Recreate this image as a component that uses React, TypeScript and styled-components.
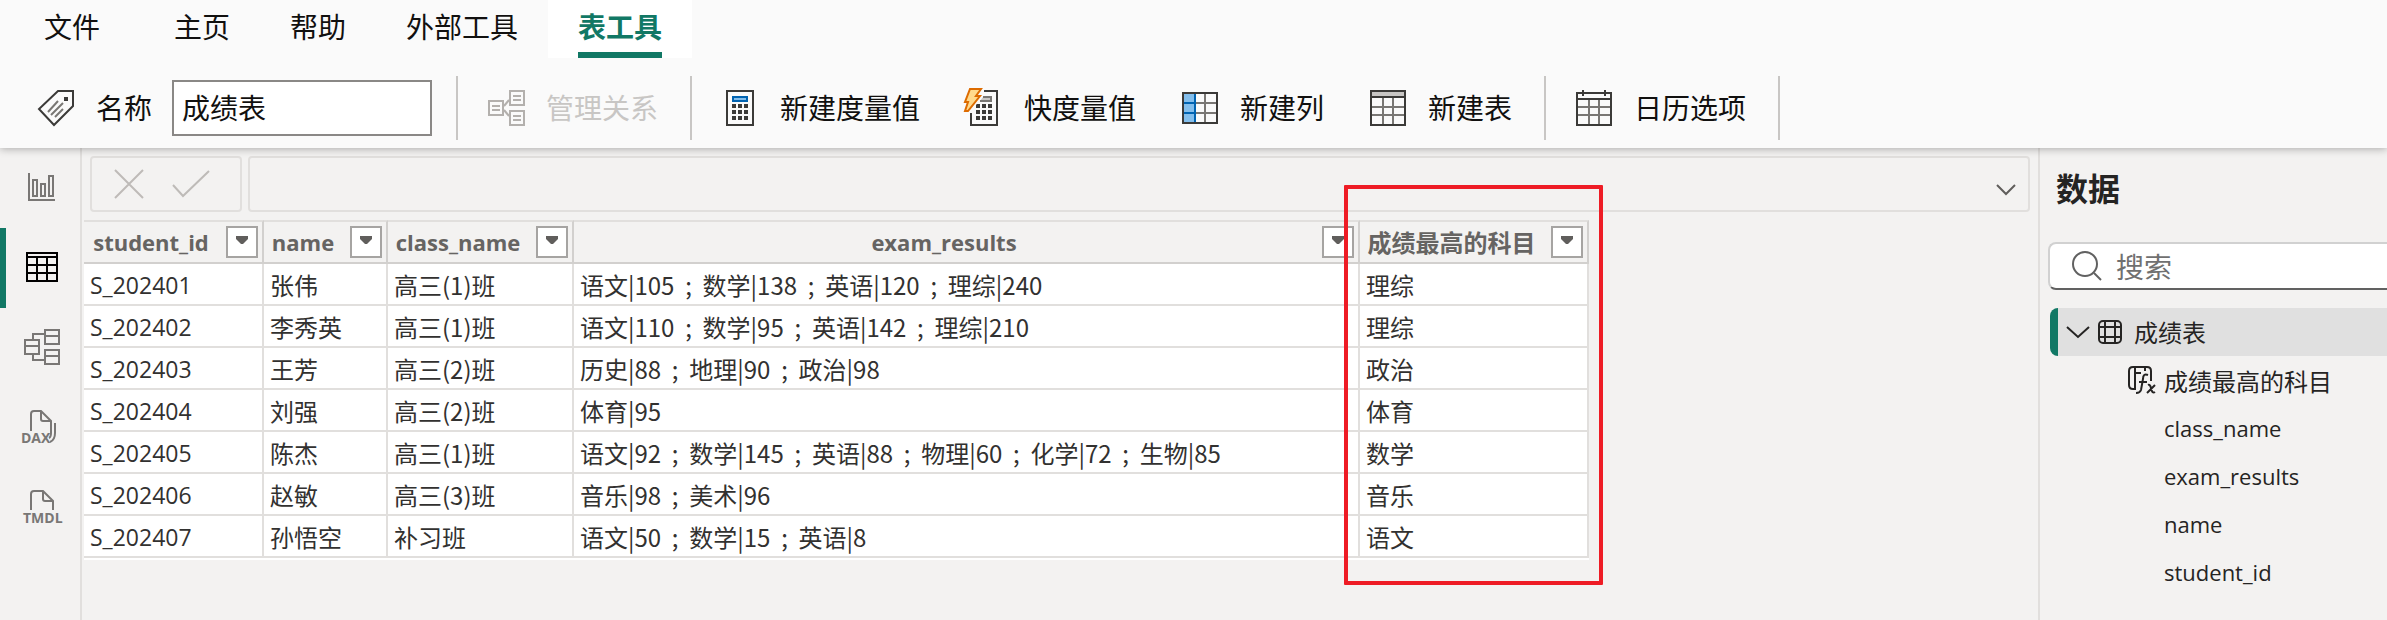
import React from 'react';
import styled, { createGlobalStyle } from 'styled-components';

const GlobalStyle = createGlobalStyle`
  *, *::before, *::after { box-sizing: border-box; }
  body {
    margin: 0;
    background: #f3f2f1;
    color: #252423;
    font-family: 'Noto Sans CJK SC', 'Open Sans', sans-serif;
    font-size: 24px;
    overflow: hidden;
  }
  button, input { font: inherit; color: inherit; }
  button { background: none; border: 0; padding: 0; margin: 0; cursor: pointer; }
  svg { display: block; flex: none; overflow: visible; fill: none; }
`;

const Page = styled.div`
  display: flex;
  flex-direction: column;
  min-height: 100vh;
`;

const Ribbon = styled.header`
  position: relative;
  z-index: 1;
  background: #fafafa;
  box-shadow: 0 1px 8px rgba(0, 0, 0, 0.3);
  color: #11100f;
  font-size: 28px;
  line-height: 40px;
`;

const Tabs = styled.nav`
  display: flex;
  height: 58px;
  padding-left: 14px;
`;

const Tab = styled.button<{ $active?: boolean; $file?: boolean }>`
  display: flex;
  flex-direction: column;
  justify-content: space-between;
  padding: 6px 30px 0;
  margin-right: ${p => (p.$file ? 14 : 0)}px;
  background: ${p => (p.$active ? '#fff' : 'transparent')};
  color: ${p => (p.$active ? '#117865' : 'inherit')};
  font-weight: ${p => (p.$active ? 700 : 400)};
  &::after {
    content: '';
    height: 6px;
    width: 100%;
    background: ${p => (p.$active ? '#117865' : 'transparent')};
  }
`;

const Commands = styled.div`
  display: flex;
  padding: 18px 0 8px 8px;
`;

const Group = styled.div`
  display: flex;
  align-items: center;
  gap: 46px;
  height: 64px;
  padding: 0 32px 0 30px;
  border-right: 2px solid #c8c6c4;
`;

const NameGroup = styled(Group)`
  gap: 20px;
  padding-right: 24px;
`;

const Command = styled.button`
  display: flex;
  align-items: center;
  gap: 22px;
  white-space: nowrap;
  &:disabled { color: #c8c6c4; }
`;

const NameLabel = styled.label`
  display: flex;
  align-items: center;
  gap: 22px;
`;

const CommandText = styled.span`
  padding-bottom: 2px;
`;

const NameInput = styled.input`
  width: 260px;
  height: 56px;
  padding: 0 8px 2px;
  border: 2px solid #8a8886;
  background: #fff;
  outline: 0;
`;

const Workspace = styled.div`
  display: flex;
  flex: 1;
`;

const Rail = styled.nav`
  flex: none;
  width: 82px;
  border-right: 2px solid #e1dfdd;
`;

const RailButton = styled.button<{ $active?: boolean }>`
  display: flex;
  align-items: center;
  justify-content: center;
  width: 100%;
  height: 80px;
  padding: 0 2px 2px 0;
  border-left: 6px solid ${p => (p.$active ? '#117865' : 'transparent')};
  color: ${p => (p.$active ? '#000' : '#797775')};
`;

const IconText = styled.text`
  font-family: 'Open Sans', sans-serif;
  font-size: 14px;
  font-weight: 700;
  fill: currentColor;
`;

const Main = styled.main`
  flex: 1;
  min-width: 0;
`;

const FormulaBar = styled.div`
  display: flex;
  gap: 6px;
  padding: 8px;
`;

const FormulaBox = styled.div`
  display: flex;
  align-items: center;
  height: 56px;
  border: 2px solid #e1dfdd;
  border-radius: 4px;
`;

const FormulaActions = styled(FormulaBox)`
  gap: 28px;
  width: 152px;
  padding-left: 22px;
  color: #bebbb8;
`;

const FormulaField = styled(FormulaBox)`
  flex: 1;
  padding-right: 12px;
  color: #605e5c;
`;

const FormulaInput = styled.input`
  flex: 1;
  height: 100%;
  border: 0;
  outline: 0;
  background: transparent;
`;

const Sheet = styled.div`
  position: relative;
  width: max-content;
  padding-left: 2px;
`;

const Highlight = styled.div`
  position: absolute;
  top: -35px;
  right: -14px;
  bottom: -25px;
  width: 259px;
  border: 4px solid #ee1c25;
  border-radius: 1px;
  pointer-events: none;
`;

const Grid = styled.table`
  table-layout: fixed;
  width: 1505px;
  border-spacing: 0;
  border-bottom: 2px solid #fff;
  line-height: 36px;
`;

const HeadCell = styled.th`
  height: 44px;
  padding: 0 4px 0 0;
  border: solid #d2d0ce;
  border-width: 2px 2px 2px 0;
  border-top-color: #e1dfdd;
  color: #666462;
  font-weight: 700;
`;

const HeadContent = styled.div`
  display: flex;
  align-items: center;
  gap: 8px;
`;

const HeadText = styled.span<{ $latin?: boolean }>`
  flex: 1;
  text-align: center;
  white-space: nowrap;
  font-family: ${p => (p.$latin ? "'Open Sans', sans-serif" : 'inherit')};
  font-size: ${p => (p.$latin ? 22 : 24)}px;
`;

const FilterButton = styled.button`
  flex: none;
  display: flex;
  justify-content: center;
  width: 32px;
  height: 32px;
  padding-top: 8px;
  border: 2px solid #a6a4a2;
  background: #fff;
`;

const Cell = styled.td<{ $latin?: boolean }>`
  height: 42px;
  padding: 2px 6px 0;
  border: solid #e1dfdd;
  border-width: 0 2px 2px 0;
  background: #fff;
  color: #323130;
  white-space: pre;
  font-family: ${p => (p.$latin ? "'Open Sans', sans-serif" : 'inherit')};
  font-size: ${p => (p.$latin ? 23 : 24)}px;
`;

const DataPane = styled.aside`
  flex: none;
  width: 349px;
  padding: 15px 0 0 8px;
  border-left: 2px solid #e1dfdd;
`;

const PaneTitle = styled.h2`
  margin: 0 0 31px;
  padding-left: 8px;
  font-size: 32px;
  line-height: 48px;
`;

const Search = styled.label`
  display: flex;
  align-items: center;
  gap: 14px;
  height: 48px;
  margin-bottom: 18px;
  padding-left: 22px;
  border: 2px solid #d1d1d1;
  border-right: 0;
  border-bottom-color: #616161;
  border-radius: 8px 0 0 8px;
  background: #fff;
  color: #616161;
`;

const SearchInput = styled.input`
  flex: 1;
  min-width: 0;
  border: 0;
  outline: 0;
  padding: 0;
  background: transparent;
  font-size: 28px;
  line-height: 40px;
  &::placeholder { color: #707070; opacity: 1; }
`;

const Tree = styled.ul`
  list-style: none;
  margin: 0;
  padding: 0 0 0 2px;
`;

const FieldList = styled.ul`
  list-style: none;
  margin: 0;
  padding: 0;
`;

const TreeTable = styled.button`
  display: flex;
  align-items: center;
  width: 100%;
  height: 48px;
  gap: 8px;
  padding-left: 8px;
  border-left: 8px solid #117865;
  border-radius: 8px 0 0 8px;
  background: #e0e0e0;
`;

const TreeName = styled.span`
  padding: 0 0 2px 4px;
`;

const TreeField = styled.button<{ $latin?: boolean }>`
  display: flex;
  align-items: center;
  width: 100%;
  height: 48px;
  padding-left: 78px;
  font-family: ${p => (p.$latin ? "'Open Sans', sans-serif" : 'inherit')};
  font-size: ${p => (p.$latin ? 22 : 24)}px;
`;

const FieldIcon = styled.span`
  width: 36px;
`;

const dark = '#3b3a38';
const mid = '#797774';

const dots = [10, 16, 22].flatMap(x => [14, 20, 26].map(y => (
  <rect key={`${x}-${y}`} x={x} y={y} width="4" height="4" fill={dark} />
)));

const TagIcon = () => (
  <svg width="36" height="36" stroke={dark} strokeWidth="2">
    <path d="M20 1H35V16L16 35L1 19Z" />
    <path d="M20 11L10 22M25 13L13 25M25 19L17 27" stroke={mid} />
    <rect x="26" y="7" width="4" height="4" fill={dark} stroke="none" />
  </svg>
);

const RelationsIcon = () => (
  <svg width="36" height="36" stroke="#b3b0ad" strokeWidth="2">
    <path d="M1 11H15V25H1ZM22 1H36V15H22ZM22 21H36V35H22Z" />
    <path d="M4 16H12M4 20H12M25 6H33M25 10H33M25 26H33M25 30H33M16 16L21 10M16 20L21 26" />
  </svg>
);

const MeasureIcon = () => (
  <svg width="36" height="36">
    <rect x="5" y="1" width="26" height="34" stroke={dark} strokeWidth="2" />
    <rect x="11" y="7" width="14" height="4" fill="#83beec" stroke="#0063b1" strokeWidth="2" />
    {dots}
  </svg>
);

const QuickMeasureIcon = () => (
  <svg width="36" height="36">
    <path d="M18 1H31V35H5V23" stroke={dark} strokeWidth="2" />
    <path d="M17 7H25V11H14" fill="#c8c6c4" stroke={mid} strokeWidth="2" />
    {dots}
    <path d="M4 -1H15L10 6H14L2 21H-1L2 12H-1Z" fill="#fafafa" stroke="#fafafa" strokeWidth="5" />
    <path d="M4 -1H15L10 6H14L2 21H-1L2 12H-1Z" fill="#ffd98c" stroke="#dd6b00" strokeWidth="2" />
  </svg>
);

const ColumnIcon = () => (
  <svg width="36" height="36" strokeWidth="2">
    <rect x="1" y="3" width="12" height="30" fill="#83beec" />
    <path d="M14 13H35M14 23H35M23 3V33" stroke={mid} />
    <path d="M1 13H13M1 23H13M13 3V33" stroke="#0063b1" />
    <rect x="1" y="3" width="34" height="30" stroke={dark} />
  </svg>
);

const TableIcon = () => (
  <svg width="36" height="36" strokeWidth="2">
    <rect x="1" y="1" width="34" height="6" fill="#c8c6c4" />
    <path d="M1 17H35M1 25H35M13 8V35M23 8V35" stroke={mid} />
    <path d="M1 1H35V35H1ZM1 7H35" stroke={dark} />
  </svg>
);

const CalendarIcon = () => (
  <svg width="36" height="36" strokeWidth="2">
    <path d="M1 17H35M1 25H35M13 10V35M23 10V35" stroke={mid} />
    <path d="M1 3H35V35H1ZM1 9H35M7 0V6M29 0V6" stroke={dark} />
  </svg>
);

const ReportViewIcon = () => (
  <svg width="28" height="28" stroke="currentColor" strokeWidth="2">
    <path d="M1 0V27H27M5 7H9V23H5ZM13 11H17V23H13ZM21 3H25V23H21Z" />
  </svg>
);

const TableViewIcon = () => (
  <svg width="32" height="30" stroke="currentColor" strokeWidth="2">
    <path d="M1 1H31V29H1ZM1 5H31M1 13H31M1 21H31M11 5V29M21 5V29" />
  </svg>
);

const ModelViewIcon = () => (
  <svg width="36" height="36" stroke="currentColor" strokeWidth="2">
    <path d="M1 11H15V25H1ZM1 17H15M21 1H35V15H21ZM21 7H35M21 21H35V35H21ZM21 27H35M9 11V5H21M9 25V31H21" />
  </svg>
);

const DaxViewIcon = () => (
  <svg width="36" height="34" stroke="currentColor" strokeWidth="2">
    <path d="M7 21V4Q7 1 10 1H17L27 11V23Q27 27 25 28M17 1V9Q17 11 19 11H27M31 13V23Q31 30 26 32" />
    <IconText x="-3" y="33" stroke="none">DAX</IconText>
  </svg>
);

const TmdlViewIcon = () => (
  <svg width="38" height="34" stroke="currentColor" strokeWidth="2">
    <path d="M8 20V4Q8 1 11 1H20L30 11V20M20 1V9Q20 11 22 11H30" />
    <IconText x="0" y="33" stroke="none">TMDL</IconText>
  </svg>
);

const FieldsTableIcon = () => (
  <svg width="24" height="24" stroke="#252423" strokeWidth="2">
    <rect x="1" y="1" width="22" height="22" rx="4" />
    <path d="M7 1V23M17 1V23M1 7H23M1 17H23" />
  </svg>
);

const CalculatedColumnIcon = () => (
  <svg width="28" height="28" stroke="#252423" strokeWidth="2">
    <path d="M8 23H5Q1 23 1 19V5Q1 1 5 1H19Q23 1 23 5V15M7 1V23M7 7H13M17 1V5" />
    <path d="M20 9Q15 7 15 13L13 24Q12 27 8 27M11 16H19" />
    <path d="M20 19Q22 18 23 22Q24 28 27 26M27 19L19 27" />
  </svg>
);

const ribbonTabs = ['主页', '帮助', '外部工具'];

const columns = [
  { name: 'student_id', width: 180 },
  { name: 'name', width: 124 },
  { name: 'class_name', width: 186 },
  { name: 'exam_results', width: 786 },
  { name: '成绩最高的科目', width: 229 },
];

const rows = [
  ['S_202401', '张伟', '高三(1)班', '语文|105  ;  数学|138  ;  英语|120  ;  理综|240', '理综'],
  ['S_202402', '李秀英', '高三(1)班', '语文|110  ;  数学|95  ;  英语|142  ;  理综|210', '理综'],
  ['S_202403', '王芳', '高三(2)班', '历史|88  ;  地理|90  ;  政治|98', '政治'],
  ['S_202404', '刘强', '高三(2)班', '体育|95', '体育'],
  ['S_202405', '陈杰', '高三(1)班', '语文|92  ;  数学|145  ;  英语|88  ;  物理|60  ;  化学|72  ;  生物|85', '数学'],
  ['S_202406', '赵敏', '高三(3)班', '音乐|98  ;  美术|96', '音乐'],
  ['S_202407', '孙悟空', '补习班', '语文|50  ;  数学|15  ;  英语|8', '语文'],
];

const fields = ['class_name', 'exam_results', 'name', 'student_id'];

export default function App() {
  return (
    <>
      <GlobalStyle />
      <Page>
        <Ribbon>
          <Tabs>
            <Tab $file>文件</Tab>
            {ribbonTabs.map(t => <Tab key={t}>{t}</Tab>)}
            <Tab $active>表工具</Tab>
          </Tabs>
          <Commands>
            <NameGroup>
              <NameLabel htmlFor="table-name"><TagIcon /><CommandText>名称</CommandText></NameLabel>
              <NameInput id="table-name" defaultValue="成绩表" />
            </NameGroup>
            <Group>
              <Command disabled><RelationsIcon /><CommandText>管理关系</CommandText></Command>
            </Group>
            <Group>
              <Command><MeasureIcon /><CommandText>新建度量值</CommandText></Command>
              <Command><QuickMeasureIcon /><CommandText>快度量值</CommandText></Command>
              <Command><ColumnIcon /><CommandText>新建列</CommandText></Command>
              <Command><TableIcon /><CommandText>新建表</CommandText></Command>
            </Group>
            <Group>
              <Command><CalendarIcon /><CommandText>日历选项</CommandText></Command>
            </Group>
          </Commands>
        </Ribbon>
        <Workspace>
          <Rail>
            <RailButton aria-label="报表视图"><ReportViewIcon /></RailButton>
            <RailButton aria-label="表格视图" $active><TableViewIcon /></RailButton>
            <RailButton aria-label="模型视图"><ModelViewIcon /></RailButton>
            <RailButton><DaxViewIcon /></RailButton>
            <RailButton><TmdlViewIcon /></RailButton>
          </Rail>
          <Main>
            <FormulaBar>
              <FormulaActions>
                <button aria-label="取消">
                  <svg width="30" height="30" stroke="currentColor" strokeWidth="2">
                    <path d="M1 1L29 29M29 1L1 29" />
                  </svg>
                </button>
                <button aria-label="提交">
                  <svg width="38" height="30" stroke="currentColor" strokeWidth="2">
                    <path d="M1 16L11 27L37 2" />
                  </svg>
                </button>
              </FormulaActions>
              <FormulaField>
                <FormulaInput aria-label="公式" />
                <button aria-label="展开">
                  <svg width="20" height="12" stroke="currentColor" strokeWidth="2">
                    <path d="M1 7L10 16L19 7" />
                  </svg>
                </button>
              </FormulaField>
            </FormulaBar>
            <Sheet>
              <Grid>
                <colgroup>
                  {columns.map(c => <col key={c.name} width={c.width} />)}
                </colgroup>
                <thead>
                  <tr>
                    {columns.map((c, i) => (
                      <HeadCell key={c.name} scope="col">
                        <HeadContent>
                          <HeadText $latin={i < 4}>{c.name}</HeadText>
                          <FilterButton aria-label="筛选">
                            <svg width="12" height="8">
                              <path d="M0 0H12V3L7 8H5L0 3Z" fill="#605e5c" />
                            </svg>
                          </FilterButton>
                        </HeadContent>
                      </HeadCell>
                    ))}
                  </tr>
                </thead>
                <tbody>
                  {rows.map(r => (
                    <tr key={r[0]}>
                      {r.map((v, i) => <Cell key={i} $latin={i === 0}>{v}</Cell>)}
                    </tr>
                  ))}
                </tbody>
              </Grid>
              <Highlight />
            </Sheet>
          </Main>
          <DataPane>
            <PaneTitle>数据</PaneTitle>
            <Search>
              <svg width="30" height="30" stroke="currentColor" strokeWidth="2">
                <circle cx="13" cy="13" r="12" />
                <path d="M22 22L29 29" />
              </svg>
              <SearchInput aria-label="搜索" placeholder="搜索" />
            </Search>
            <Tree>
              <li>
                <TreeTable>
                  <svg width="24" height="12" stroke="#252423" strokeWidth="2">
                    <path d="M1 1L12 11L23 1" />
                  </svg>
                  <FieldsTableIcon />
                  <TreeName>成绩表</TreeName>
                </TreeTable>
                <FieldList>
                  <li>
                    <TreeField><FieldIcon><CalculatedColumnIcon /></FieldIcon>成绩最高的科目</TreeField>
                  </li>
                  {fields.map(f => (
                    <li key={f}>
                      <TreeField $latin><FieldIcon />{f}</TreeField>
                    </li>
                  ))}
                </FieldList>
              </li>
            </Tree>
          </DataPane>
        </Workspace>
      </Page>
    </>
  );
}
